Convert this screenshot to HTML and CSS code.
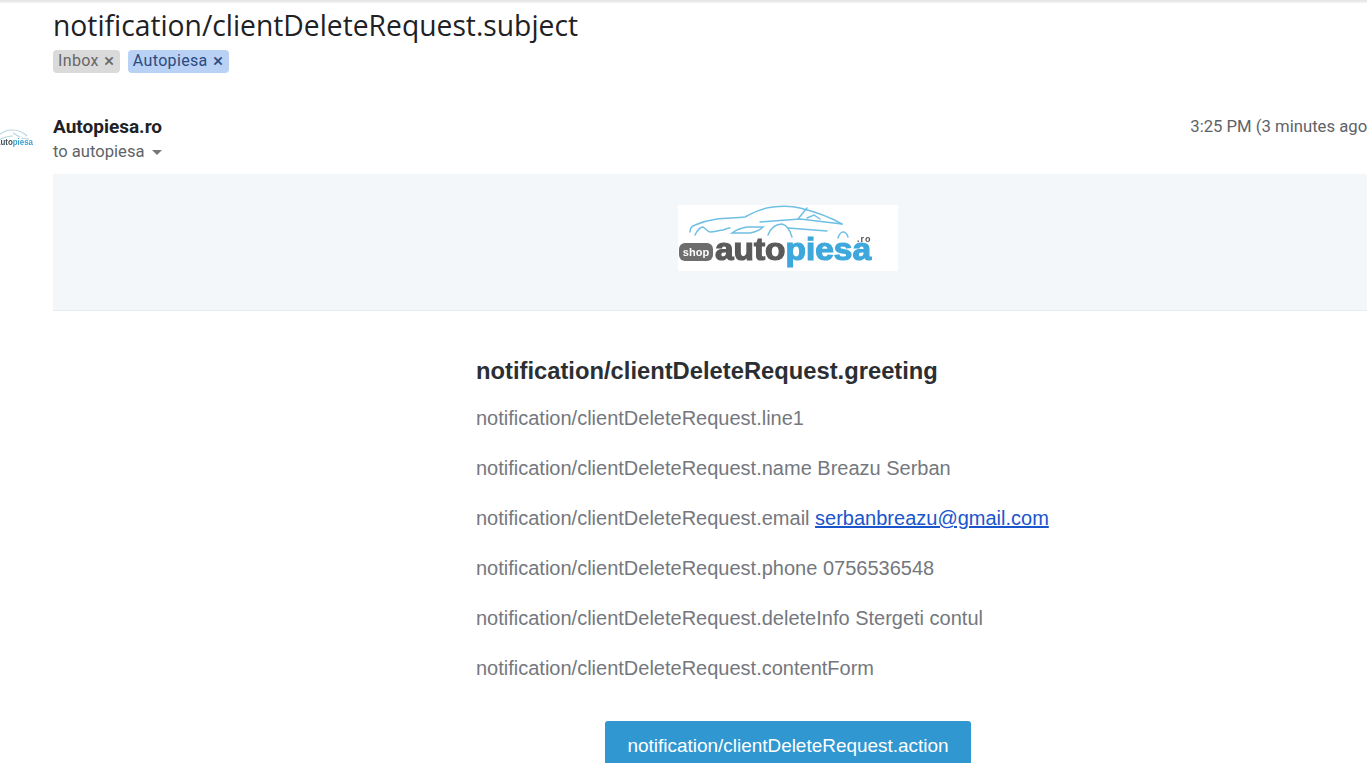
FILE: index.html
```html
<!DOCTYPE html>
<html lang="en">
<head>
<meta charset="utf-8">
<title>notification/clientDeleteRequest.subject</title>
<link rel="stylesheet" href="styles.css">
</head>
<body>
<div class="shadow"></div>
<main class="thread">
  <h1 class="subject">notification/clientDeleteRequest.subject</h1>
  <div class="labels">
    <span class="label label-grey">Inbox <b class="x">×</b></span>
    <span class="label label-blue">Autopiesa <b class="x">×</b></span>
  </div>
  <div class="message">
    <svg class="avatar" viewBox="0 0 40 40" aria-hidden="true">
      <g fill="none" stroke="#b5d5e3" stroke-width="1.200">
        <path d="M5 20c4-4 9-6 14-6s11 2 15 6"/>
        <path d="M6 24c5-3 10-4 14-4M20 17l7 4M28 22l8 1"/>
      </g>
      <text x="3" y="29" class="avatar-text" textLength="37" lengthAdjust="spacingAndGlyphs"><tspan class="avatar-a">auto</tspan><tspan class="avatar-b">piesa</tspan></text>
    </svg>
    <div class="head">
      <div class="meta">
        <div class="sender">Autopiesa.ro</div>
        <div class="to">to autopiesa <i class="caret"></i></div>
      </div>
      <div class="time">3:25 PM (3 minutes ago)</div>
    </div>
    <div class="mail">
      <div class="banner">
        <svg class="logo" viewBox="0 0 220 66" aria-label="autopiesa logo">
          <rect width="220" height="66" fill="#fff"/>
          <g fill="none" stroke="#6fbfe4" stroke-width="1.500" stroke-linecap="round">
            <path d="M12 27c0-3 2-6 5-7 7-3 15-5 22-6 10-1 19-1 28-2 9-5 18-9 28-10 9-1 19-1 27 1 12 3 30 9 42 16"/>
            <path d="M17 30c2-4 5-8 8-8 3 2 5 5 7 5 5 0 9-2 13-2 3-1 5-2 7-2"/>
            <path d="M54 28c4-3 9-5 15-6h16c-3 3-8 5-13 6z"/>
            <path d="M90 30c2-5 6-11 14-11 5 1 8 6 10 13"/>
            <path d="M110 23l39 3M82 17l40-3 42 5"/>
            <path d="M120 14l9-11M129 13l7-3 6 4"/>
            <path d="M160 33c1-3 3-6 5-6s4 2 5 5"/>
          </g>
          <rect x="1" y="38" width="34" height="18" rx="6" fill="#6d6d6d"/>
          <text x="18" y="50.500" class="logo-shop">shop</text>
          <text x="37" y="55" class="logo-word" textLength="156" lengthAdjust="spacingAndGlyphs"><tspan class="logo-auto">auto</tspan><tspan class="logo-piesa">piesa</tspan></text>
          <text x="179" y="37" class="logo-ro">.ro</text>
        </svg>
      </div>
      <div class="content">
        <h2 class="greeting">notification/clientDeleteRequest.greeting</h2>
        <p>notification/clientDeleteRequest.line1</p>
        <p>notification/clientDeleteRequest.name Breazu Serban</p>
        <p>notification/clientDeleteRequest.email <a href="#">serbanbreazu@gmail.com</a></p>
        <p>notification/clientDeleteRequest.phone 0756536548</p>
        <p>notification/clientDeleteRequest.deleteInfo Stergeti contul</p>
        <p>notification/clientDeleteRequest.contentForm</p>
        <div class="action"><a class="button" href="#">notification/clientDeleteRequest.action</a></div>
      </div>
    </div>
  </div>
</main>
</body>
</html>
```
FILE: styles.css
```css
html, body {
  margin: 0;
  height: 100%;
  overflow: hidden;
  background: #fff;
}
body {
  width: 1367px;
  height: 763px;
  position: relative;
  font-family: Roboto, "Liberation Sans", sans-serif;
}
.shadow {
  height: 3px;
  background: linear-gradient(#e2e2e2, #f6f6f6);
}
.thread {
  width: 1470px;
  padding-left: 53px;
}
.subject {
  margin: 0;
  padding-top: 5px;
  font: 400 28.250px/34px "Open Sans", sans-serif;
  color: #202124;
}
.labels {
  display: flex;
  gap: 8px;
  margin-top: 8px;
}
.label {
  display: flex;
  gap: 5px;
  height: 23px;
  padding: 0 5px;
  border-radius: 4px;
  font-size: 16px;
  line-height: 22px;
  letter-spacing: 0.350px;
}
.label-grey { background: #dadada; color: #666; }
.label-blue { background: #b8d1f5; color: #2b4a80; }
.x { width: 11px; font-size: 19px; font-weight: 400; text-align: center; }
.message { position: relative; margin-top: 43px; }
.avatar {
  position: absolute;
  left: -60px;
  top: 0;
  width: 40px;
  height: 40px;
  filter: blur(0.300px);
}
.avatar-text {
  font: 700 9px "Liberation Sans", sans-serif;
}
.avatar-a { fill: #444f57; }
.avatar-b { fill: #3ba0cf; }
.head {
  display: flex;
  justify-content: space-between;
  align-items: flex-start;
  width: 1320px;
}
.sender {
  font-size: 19px;
  font-weight: 700;
  line-height: 22px;
  color: #202124;
}
.to {
  margin-top: 4px;
  font-size: 16.600px;
  line-height: 20px;
  color: #5f6368;
}
.caret {
  display: inline-block;
  margin-left: 3px;
  vertical-align: middle;
  border: 5.500px solid transparent;
  border-top-color: #777;
  border-bottom-width: 0;
}
.time {
  font-size: 16.700px;
  line-height: 22px;
  color: #5f6368;
  white-space: nowrap;
}
.mail { margin-top: 12px; }
.banner {
  display: flex;
  justify-content: center;
  padding: 31px 0 39px;
  background: #f4f7fa;
  border-bottom: 1px solid #e8ebee;
}
.logo { display: block; width: 220px; height: 66px; filter: blur(0.400px); }
.logo-shop { font: 700 11px "Liberation Sans", sans-serif; fill: #fff; text-anchor: middle; }
.logo-word { font: 700 31px "Liberation Sans", sans-serif; stroke-width: 1.200px; }
.logo-auto { fill: #5a5a5a; stroke: #5a5a5a; }
.logo-piesa { fill: #3ea8dc; stroke: #3ea8dc; }
.logo-ro { font: 700 9px "Liberation Sans", sans-serif; fill: #555; letter-spacing: 1px; }
.content {
  width: 624px;
  margin: 0 auto;
  padding-top: 44px;
  font-family: "Liberation Sans", Arial, sans-serif;
}
.greeting {
  margin: 0 0 17px;
  font-size: 23.750px;
  line-height: 32px;
  font-weight: 700;
  color: #2b2f33;
}
.content p {
  margin: 0 0 22px;
  font-size: 20px;
  line-height: 28px;
  color: #74787e;
}
.content p a { color: #1a55cc; }
.action {
  display: flex;
  justify-content: center;
  margin-top: 39px;
}
.button {
  display: block;
  width: 366px;
  box-sizing: border-box;
  height: 60px;
  padding-top: 11px;
  border-radius: 3px;
  background: #3097d1;
  color: #fff;
  font-size: 18.950px;
  line-height: 28px;
  text-align: center;
  text-decoration: none;
}
```
